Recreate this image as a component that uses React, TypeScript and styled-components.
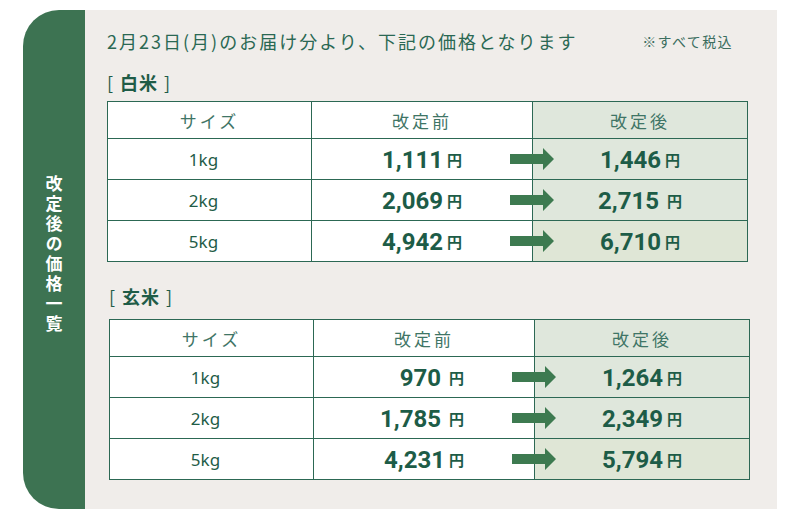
import React from 'react';
import styled, { createGlobalStyle } from 'styled-components';

const GlobalStyle = createGlobalStyle`
    body {
        margin: 0;
        background: #ffffff;
        font-family: "Noto Sans CJK JP", "Noto Sans", sans-serif;
    }
`;

const Page = styled.div`
    padding: 10px 23px 8px 23px;
`;

const Card = styled.div`
    display: flex;
    width: 754px;
    height: 499px;
`;

const Sidebar = styled.div`
    width: 62px;
    flex-shrink: 0;
    background: #3d7352;
    border-radius: 36px 0 0 36px;
    display: flex;
    align-items: center;
    justify-content: center;
    padding-bottom: 10px;
    box-sizing: border-box;
`;

const SideTitle = styled.div`
    writing-mode: vertical-rl;
    color: #ffffff;
    font-size: 17px;
    font-weight: 700;
    letter-spacing: 3px;
    line-height: 1;
`;

const Panel = styled.div`
    flex: 1;
    background: #f0edea;
    padding: 18px 0 0 22px;
    box-sizing: border-box;
`;

const Notice = styled.div`
    width: 640px;
    display: flex;
    justify-content: space-between;
    align-items: center;
    height: 26px;
    color: #2a6853;
    padding-right: 14px;
    box-sizing: border-box;
`;

const Lead = styled.span`
    font-size: 18px;
    letter-spacing: 2px;
`;

const Note = styled.span`
    font-size: 14px;
    letter-spacing: 1.4px;
    color: #3b6e5f;
`;

const Section = styled.section<{ $top: number; $shift: number }>`
    margin-top: ${(p) => p.$top}px;
    margin-left: ${(p) => p.$shift}px;
`;

const Label = styled.div<{ $gap: number }>`
    height: 26px;
    line-height: 26px;
    font-size: 18px;
    color: #1f5c47;
    margin-bottom: ${(p) => p.$gap}px;
    letter-spacing: 1px;

    b {
        font-weight: 700;
        margin: 0 6px;
    }
`;

const Table = styled.table`
    border-collapse: collapse;
    width: 640px;
    table-layout: fixed;
    background: #ffffff;

    td, th {
        border: 1.5px solid #2c6854;
        padding: 0;
    }
`;

const HeadCell = styled.th<{ $after?: boolean }>`
    height: 36px;
    font-size: 17px;
    font-weight: 400;
    color: #3f7566;
    letter-spacing: 3px;
    text-align: center;
    background: ${(p) => (p.$after ? '#dfe7dc' : '#ffffff')};
`;

const SizeCell = styled.td`
    height: 40px;
    font-family: "Noto Sans", sans-serif;
    font-size: 17px;
    color: #1f5c47;
    text-align: center;
    padding-right: 12px !important;
`;

const BeforeCell = styled.td`
    position: relative;
    text-align: right;
    padding-right: 70px !important;
`;

const AfterCell = styled.td<{ $last?: boolean }>`
    text-align: center;
    background: ${(p) => (p.$last ? '#dfe6d6' : '#dfe7dc')};
`;

const Num = styled.span`
    font-family: Roboto, "Noto Sans", sans-serif;
    font-weight: 700;
    font-size: 24px;
    color: #1d5c47;
    vertical-align: middle;
`;

const Yen = styled.span<{ $wide?: boolean }>`
    font-family: "Noto Sans CJK JP", sans-serif;
    font-weight: 700;
    font-size: 15px;
    color: #1d5c47;
    margin-left: ${(p) => (p.$wide ? 8 : 4)}px;
    vertical-align: middle;
`;

const Arrow = styled.svg`
    position: absolute;
    right: -22px;
    top: 50%;
    margin-top: -11px;
    z-index: 2;
`;

type Row = {
    size: string;
    before: string;
    after: string;
    bWide?: boolean;
    aWide?: boolean;
};

const white: Row[] = [
    { size: '1kg', before: '1,111', after: '1,446' },
    { size: '2kg', before: '2,069', after: '2,715', aWide: true },
    { size: '5kg', before: '4,942', after: '6,710' },
];

const brown: Row[] = [
    { size: '1kg', before: '970', after: '1,264', bWide: true },
    { size: '2kg', before: '1,785', after: '2,349', bWide: true },
    { size: '5kg', before: '4,231', after: '5,794' },
];

const PriceArrow = () => (
    <Arrow width="44" height="22" viewBox="0 0 44 22">
        <path d="M0 6 H33 V0 L44 11 L33 22 V16 H0 Z" fill="#3d7a50" />
    </Arrow>
);

const PriceTable = ({ rows }: { rows: Row[] }) => (
    <Table>
        <colgroup>
            <col style={{ width: 204 }} />
            <col style={{ width: 221 }} />
            <col style={{ width: 215 }} />
        </colgroup>
        <thead>
            <tr>
                <HeadCell>サイズ</HeadCell>
                <HeadCell>改定前</HeadCell>
                <HeadCell $after>改定後</HeadCell>
            </tr>
        </thead>
        <tbody>
            {rows.map((r, i) => (
                <tr key={r.size}>
                    <SizeCell>{r.size}</SizeCell>
                    <BeforeCell>
                        <Num>{r.before}</Num>
                        <Yen $wide={r.bWide}>円</Yen>
                        <PriceArrow />
                    </BeforeCell>
                    <AfterCell $last={i === rows.length - 1}>
                        <Num>{r.after}</Num>
                        <Yen $wide={r.aWide}>円</Yen>
                    </AfterCell>
                </tr>
            ))}
        </tbody>
    </Table>
);

const App = () => {
    return (
        <>
            <GlobalStyle />
            <Page>
                <Card>
                    <Sidebar>
                        <SideTitle>改定後の価格一覧</SideTitle>
                    </Sidebar>
                    <Panel>
                        <Notice>
                            <Lead>2月23日(月)のお届け分より、下記の価格となります</Lead>
                            <Note>※すべて税込</Note>
                        </Notice>
                        <Section $top={15} $shift={0}>
                            <Label $gap={6}>[<b>白米</b>]</Label>
                            <PriceTable rows={white} />
                        </Section>
                        <Section $top={21} $shift={2}>
                            <Label $gap={10}>[<b>玄米</b>]</Label>
                            <PriceTable rows={brown} />
                        </Section>
                    </Panel>
                </Card>
            </Page>
        </>
    );
};

export default App;
